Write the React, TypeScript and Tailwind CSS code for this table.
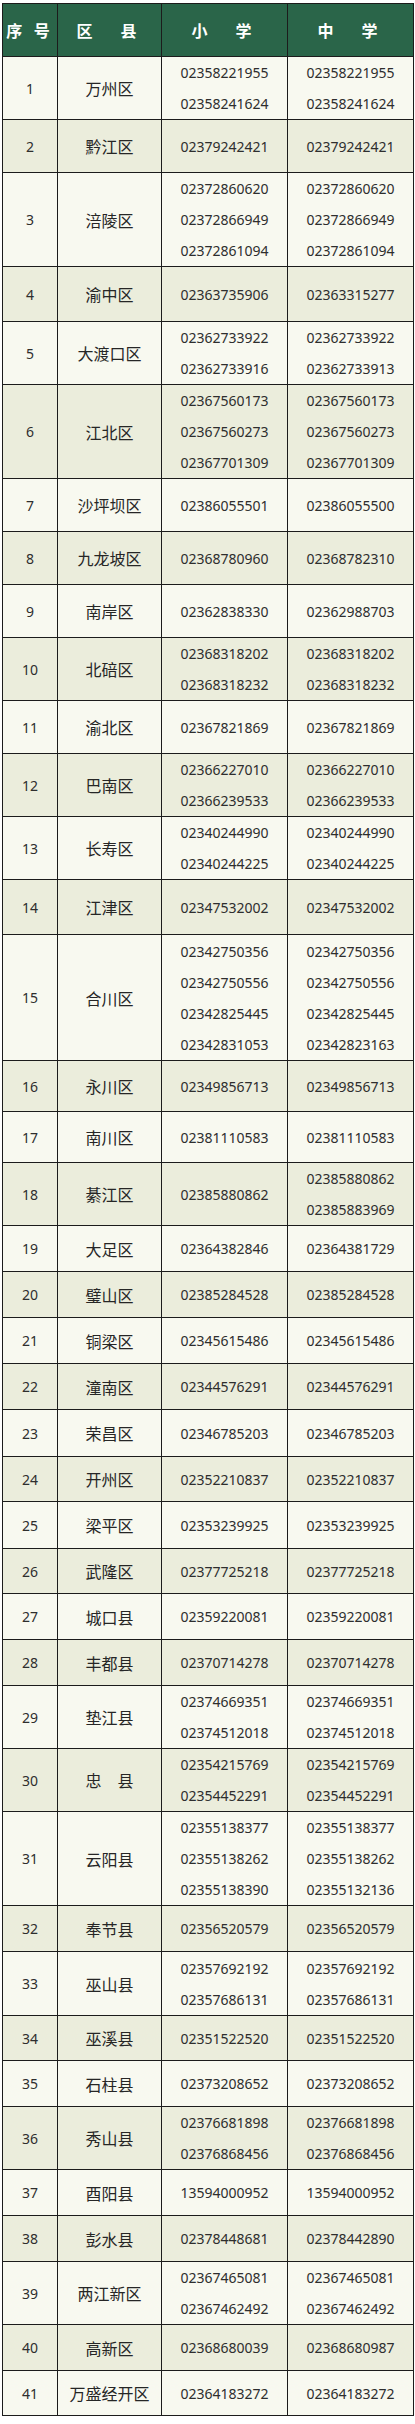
import React from "react"

interface Row {
  no: number
  name: string
  primary: string[]
  middle: string[]
  h: string
}

const rows: Row[] = [
  { no: 1, name: "万州区", primary: ["02358221955", "02358241624"], middle: ["02358221955", "02358241624"], h: "h-[63px]" },
  { no: 2, name: "黔江区", primary: ["02379242421"], middle: ["02379242421"], h: "h-[53px]" },
  { no: 3, name: "涪陵区", primary: ["02372860620", "02372866949", "02372861094"], middle: ["02372860620", "02372866949", "02372861094"], h: "h-[94px]" },
  { no: 4, name: "渝中区", primary: ["02363735906"], middle: ["02363315277"], h: "h-[55px]" },
  { no: 5, name: "大渡口区", primary: ["02362733922", "02362733916"], middle: ["02362733922", "02362733913"], h: "h-[63px]" },
  { no: 6, name: "江北区", primary: ["02367560173", "02367560273", "02367701309"], middle: ["02367560173", "02367560273", "02367701309"], h: "h-[94px]" },
  { no: 7, name: "沙坪坝区", primary: ["02386055501"], middle: ["02386055500"], h: "h-[53px]" },
  { no: 8, name: "九龙坡区", primary: ["02368780960"], middle: ["02368782310"], h: "h-[53px]" },
  { no: 9, name: "南岸区", primary: ["02362838330"], middle: ["02362988703"], h: "h-[53px]" },
  { no: 10, name: "北碚区", primary: ["02368318202", "02368318232"], middle: ["02368318202", "02368318232"], h: "h-[63px]" },
  { no: 11, name: "渝北区", primary: ["02367821869"], middle: ["02367821869"], h: "h-[53px]" },
  { no: 12, name: "巴南区", primary: ["02366227010", "02366239533"], middle: ["02366227010", "02366239533"], h: "h-[62px]" },
  { no: 13, name: "长寿区", primary: ["02340244990", "02340244225"], middle: ["02340244990", "02340244225"], h: "h-[63px]" },
  { no: 14, name: "江津区", primary: ["02347532002"], middle: ["02347532002"], h: "h-[55px]" },
  { no: 15, name: "合川区", primary: ["02342750356", "02342750556", "02342825445", "02342831053"], middle: ["02342750356", "02342750556", "02342825445", "02342823163"], h: "h-[126px]" },
  { no: 16, name: "永川区", primary: ["02349856713"], middle: ["02349856713"], h: "h-[51px]" },
  { no: 17, name: "南川区", primary: ["02381110583"], middle: ["02381110583"], h: "h-[51px]" },
  { no: 18, name: "綦江区", primary: ["02385880862"], middle: ["02385880862", "02385883969"], h: "h-[62px]" },
  { no: 19, name: "大足区", primary: ["02364382846"], middle: ["02364381729"], h: "h-[46px]" },
  { no: 20, name: "璧山区", primary: ["02385284528"], middle: ["02385284528"], h: "h-[46px]" },
  { no: 21, name: "铜梁区", primary: ["02345615486"], middle: ["02345615486"], h: "h-[46px]" },
  { no: 22, name: "潼南区", primary: ["02344576291"], middle: ["02344576291"], h: "h-[46px]" },
  { no: 23, name: "荣昌区", primary: ["02346785203"], middle: ["02346785203"], h: "h-[47px]" },
  { no: 24, name: "开州区", primary: ["02352210837"], middle: ["02352210837"], h: "h-[45px]" },
  { no: 25, name: "梁平区", primary: ["02353239925"], middle: ["02353239925"], h: "h-[47px]" },
  { no: 26, name: "武隆区", primary: ["02377725218"], middle: ["02377725218"], h: "h-[45px]" },
  { no: 27, name: "城口县", primary: ["02359220081"], middle: ["02359220081"], h: "h-[46px]" },
  { no: 28, name: "丰都县", primary: ["02370714278"], middle: ["02370714278"], h: "h-[46px]" },
  { no: 29, name: "垫江县", primary: ["02374669351", "02374512018"], middle: ["02374669351", "02374512018"], h: "h-[63px]" },
  { no: 30, name: "忠　县", primary: ["02354215769", "02354452291"], middle: ["02354215769", "02354452291"], h: "h-[63px]" },
  { no: 31, name: "云阳县", primary: ["02355138377", "02355138262", "02355138390"], middle: ["02355138377", "02355138262", "02355132136"], h: "h-[94px]" },
  { no: 32, name: "奉节县", primary: ["02356520579"], middle: ["02356520579"], h: "h-[46px]" },
  { no: 33, name: "巫山县", primary: ["02357692192", "02357686131"], middle: ["02357692192", "02357686131"], h: "h-[64px]" },
  { no: 34, name: "巫溪县", primary: ["02351522520"], middle: ["02351522520"], h: "h-[45px]" },
  { no: 35, name: "石柱县", primary: ["02373208652"], middle: ["02373208652"], h: "h-[46px]" },
  { no: 36, name: "秀山县", primary: ["02376681898", "02376868456"], middle: ["02376681898", "02376868456"], h: "h-[63px]" },
  { no: 37, name: "酉阳县", primary: ["13594000952"], middle: ["13594000952"], h: "h-[46px]" },
  { no: 38, name: "彭水县", primary: ["02378448681"], middle: ["02378442890"], h: "h-[46px]" },
  { no: 39, name: "两江新区", primary: ["02367465081", "02367462492"], middle: ["02367465081", "02367462492"], h: "h-[63px]" },
  { no: 40, name: "高新区", primary: ["02368680039"], middle: ["02368680987"], h: "h-[46px]" },
  { no: 41, name: "万盛经开区", primary: ["02364183272"], middle: ["02364183272"], h: "h-[45px]" },
]

const cell = "border border-[#1c1c1c] text-center align-middle p-0"
const digits = "font-['Noto_Sans',sans-serif] text-[14px] tabular-nums text-[#2e2e2e]"

function Phones({ list }: { list: string[] }) {
  return (
    <div className="flex flex-col items-center">
      {list.map((p, i) => (
        <span key={i} className="leading-[31px]">
          {p}
        </span>
      ))}
    </div>
  )
}

export default function App() {
  return (
    <div className="w-[415px] h-[2424px] bg-white pt-[3px] pl-[2px] font-['Noto_Sans_CJK_SC',sans-serif]">
      <table className="w-[411px] border-collapse table-fixed">
        <colgroup>
          <col className="w-[55px]" />
          <col className="w-[104px]" />
          <col className="w-[126px]" />
          <col className="w-[126px]" />
        </colgroup>
        <thead>
          <tr className="h-[53px] bg-[#2a6549] text-white text-[16px] font-bold">
            <th className={cell + " tracking-[4px]"}>序 号</th>
            <th className={cell + " tracking-[6px]"}>区　县</th>
            <th className={cell + " tracking-[6px]"}>小　学</th>
            <th className={cell + " tracking-[6px]"}>中　学</th>
          </tr>
        </thead>
        <tbody>
          {rows.map((r) => (
            <tr key={r.no} className={r.h + " " + (r.no % 2 === 0 ? "bg-[#ebeddc]" : "bg-[#f8f9f0]")}>
              <td className={cell + " " + digits}>{r.no}</td>
              <td className={cell + " text-[16px] text-[#262626]"}>{r.name}</td>
              <td className={cell + " " + digits}>
                <Phones list={r.primary} />
              </td>
              <td className={cell + " " + digits}>
                <Phones list={r.middle} />
              </td>
            </tr>
          ))}
        </tbody>
      </table>
    </div>
  )
}
